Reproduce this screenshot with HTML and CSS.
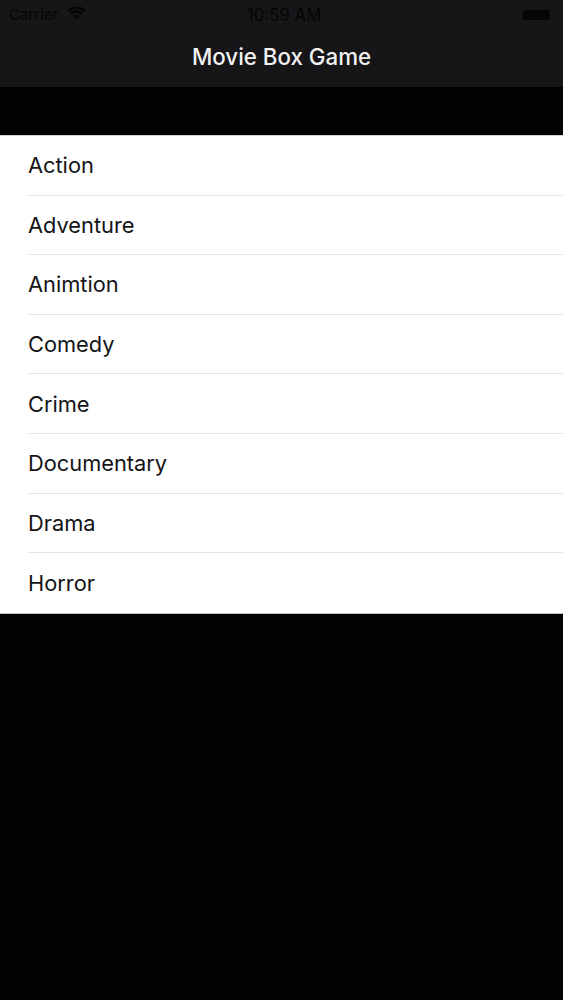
FILE: index.html
```html
<!DOCTYPE html>
<html lang="en">
<head>
<meta charset="utf-8">
<title>Movie Box Game</title>
<link rel="stylesheet" href="styles.css">
</head>
<body>
<header class="bar">
  <div class="status">
    <div class="status-left">
      <span>Carrier</span>
      <svg class="wifi" viewBox="0 0 18 13" aria-hidden="true"><path d="M9 12.500 5.800 9.200a4.500 4.500 0 0 1 6.400 0ZM4.400 7.700 2.600 5.900a9 9 0 0 1 12.800 0l-1.800 1.800a6.500 6.500 0 0 0-9.200 0ZM1.800 4.900 0 3a12.700 12.700 0 0 1 18 0l-1.800 1.900a10.100 10.100 0 0 0-14.400 0Z"/></svg>
    </div>
    <span class="status-time">10:59 AM</span>
    <div class="battery"></div>
  </div>
  <div class="nav">Movie Box Game</div>
</header>
<ul class="list">
  <li class="row"><span class="label">Action</span></li>
  <li class="row"><span class="label">Adventure</span></li>
  <li class="row"><span class="label">Animtion</span></li>
  <li class="row"><span class="label">Comedy</span></li>
  <li class="row"><span class="label">Crime</span></li>
  <li class="row"><span class="label">Documentary</span></li>
  <li class="row"><span class="label">Drama</span></li>
  <li class="row"><span class="label">Horror</span></li>
</ul>
</body>
</html>
```
FILE: styles.css
```css
* { box-sizing: border-box; }
html, body { margin: 0; padding: 0; }
body {
  width: 563px;
  height: 1000px;
  overflow: hidden;
  background: #020103;
  font-family: Inter, "Liberation Sans", sans-serif;
}
.bar {
  height: 87px;
  background: #161517;
  display: flex;
  flex-direction: column;
}
.status {
  height: 29px;
  padding: 0 13px 0 9px;
  display: grid;
  grid-template-columns: 238px auto 1fr;
  align-items: center;
  font-size: 15px;
  color: #050506;
}
.status-left { display: flex; align-items: center; gap: 9px; }
.wifi { width: 19px; height: 13px; fill: #050506; margin-top: -2px; }
.status-time { font-size: 16.800px; }
.battery {
  justify-self: end;
  width: 27px;
  height: 10px;
  border-radius: 2px;
  background: #050506;
}
.nav {
  height: 58px;
  padding-bottom: 3px;
  display: flex;
  align-items: center;
  justify-content: center;
  color: #f2f2f3;
  font-size: 22.300px;
  font-weight: 500;
}
.list {
  list-style: none;
  margin: 48px 0 0;
  padding: 0;
  background: #fff;
  border-top: 1px solid #d4d4d6;
  border-bottom: 1px solid #c4c4c6;
}
.row {
  height: 59.600px;
  padding-left: 28px;
}
.label {
  display: flex;
  align-items: center;
  height: 100%;
  font-size: 21.800px;
  color: #141416;
  border-bottom: 1px solid #e4e4e5;
}
.row:last-child .label { border-bottom: 0; }
```
